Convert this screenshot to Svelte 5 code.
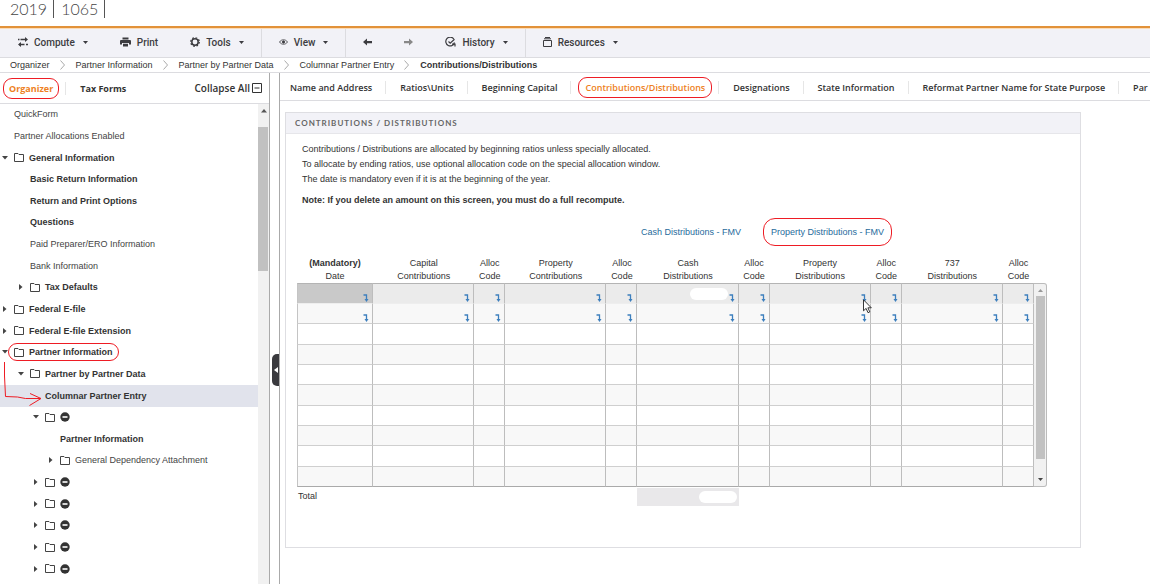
<script lang="ts">
  interface Row {
    label?: string;
    level: number;
    arrow?: 'open' | 'closed';
    folder?: boolean;
    minus?: boolean;
    light?: boolean;
    selected?: boolean;
    marked?: boolean;
  }

  const crumbs = ['Organizer', 'Partner Information', 'Partner by Partner Data', 'Columnar Partner Entry'];

  const tabs = [
    'Name and Address',
    'Ratios\\Units',
    'Beginning Capital',
    'Contributions/Distributions',
    'Designations',
    'State Information',
    'Reformat Partner Name for State Purpose',
    'Par',
  ];
  let activeTab = $state('Contributions/Distributions');

  const partner: Row = { level: 2, arrow: 'closed', folder: true, minus: true };

  const tree: Row[] = [
    { label: 'QuickForm', level: 0, light: true },
    { label: 'Partner Allocations Enabled', level: 0, light: true },
    { label: 'General Information', level: 0, arrow: 'open', folder: true },
    { label: 'Basic Return Information', level: 1 },
    { label: 'Return and Print Options', level: 1 },
    { label: 'Questions', level: 1 },
    { label: 'Paid Preparer/ERO Information', level: 1, light: true },
    { label: 'Bank Information', level: 1, light: true },
    { label: 'Tax Defaults', level: 1, arrow: 'closed', folder: true },
    { label: 'Federal E-file', level: 0, arrow: 'closed', folder: true },
    { label: 'Federal E-file Extension', level: 0, arrow: 'closed', folder: true },
    { label: 'Partner Information', level: 0, arrow: 'open', folder: true, marked: true },
    { label: 'Partner by Partner Data', level: 1, arrow: 'open', folder: true },
    { label: 'Columnar Partner Entry', level: 2, selected: true },
    { ...partner, arrow: 'open' },
    { label: 'Partner Information', level: 3 },
    { label: 'General Dependency Attachment', level: 3, arrow: 'closed', folder: true, light: true },
    partner,
    partner,
    partner,
    partner,
    partner,
  ];

  const columns = [
    ['(Mandatory)', 'Date'],
    ['Capital', 'Contributions'],
    ['Alloc', 'Code'],
    ['Property', 'Contributions'],
    ['Alloc', 'Code'],
    ['Cash', 'Distributions'],
    ['Alloc', 'Code'],
    ['Property', 'Distributions'],
    ['Alloc', 'Code'],
    ['737', 'Distributions'],
    ['Alloc', 'Code'],
  ];
  const rows = Array.from({ length: 10 }, (_, i) => i);

  function colClass(i: number) {
    if (i === 0) return 'col-date';
    return i % 2 ? 'col-amount' : 'col-code';
  }
</script>

{#snippet caret()}
  <svg class="caret" width="5" height="3" viewBox="0 0 5 3"><path d="M0 0h5L2.500 3z" fill="currentColor" /></svg>
{/snippet}

<div class="app">
  <header class="title">
    <span>2019</span><span>1065</span>
  </header>

  <nav class="toolbar" aria-label="Toolbar">
    <div class="group">
      <button>
        <svg width="10" height="10" viewBox="0 0 10 10" fill="none" stroke="currentColor" stroke-width="1.4">
          <path d="M0 2.5h1.5M2.5 2.5H8M1 7.5h5.5M8 7.5h2" />
          <path d="M7 0l3 2.5L7 5zM3 5L0 7.5 3 10z" fill="currentColor" stroke="none" />
        </svg>
        Compute {@render caret()}
      </button>
      <button>
        <svg width="11" height="10" viewBox="0 0 11 10" fill="currentColor">
          <path d="M2.500.5h6v2h-6zM1.200 3h8.600c.7 0 1.200.5 1.200 1.200V7.500H9V6H2v1.500H0V4.200C0 3.500.5 3 1.200 3zM3 6.800h5V9.500H3z" />
        </svg>
        Print
      </button>
      <button>
        <svg width="10" height="10" viewBox="0 0 10 10" fill="none" stroke="currentColor">
          <circle cx="5" cy="5" r="3.2" stroke-width="1.500" />
          <circle cx="5" cy="5" r="4.300" stroke-width="1.200" stroke-dasharray="1.700 1.677" />
        </svg>
        Tools {@render caret()}
      </button>
    </div>
    <div class="group">
      <button>
        <svg width="9" height="8" viewBox="0 0 9 8" fill="none" stroke="currentColor" stroke-width=".8">
          <path d="M.5 4C2.300 1 6.700 1 8.500 4 6.700 7 2.300 7 .5 4z" />
          <circle cx="4.500" cy="4" r="1.200" fill="currentColor" />
        </svg>
        View {@render caret()}
      </button>
    </div>
    <div class="group">
      <button aria-label="Back">
        <svg width="9" height="8" viewBox="0 0 9 8" fill="currentColor"><path d="M0 4l4-3.500V3h5v2.200H4v2.300z" /></svg>
      </button>
      <button class="dim" aria-label="Forward">
        <svg width="9" height="8" viewBox="0 0 9 8" fill="currentColor"><path d="M9 4L5 .5V3H0v2.200h5v2.300z" /></svg>
      </button>
      <button>
        <svg width="11" height="10" viewBox="0 0 11 10" fill="none" stroke="currentColor" stroke-width="1.200">
          <path d="M8.800 2A4.400 4.400 0 1 0 9.500 5.500M3.500 4.500l1.700 1.600L9.500 2.300" />
          <path d="M7 7.200h3v2.300" />
        </svg>
        History {@render caret()}
      </button>
    </div>
    <div class="group">
      <button>
        <svg width="9" height="10" viewBox="0 0 9 10" fill="none" stroke="currentColor">
          <path d="M.5 3.500h8v6h-8zM1 1.800h7M2 .5h5" />
        </svg>
        Resources {@render caret()}
      </button>
    </div>
  </nav>

  <nav class="crumbs" aria-label="Breadcrumb">
    {#each crumbs as crumb}
      <a href="#crumb">{crumb}</a>
      <svg width="5" height="10" viewBox="0 0 5 10" fill="none" stroke="#aaa"><path d="M.5.5l4 4.500-4 4.500" /></svg>
    {/each}
    <strong>Contributions/Distributions</strong>
  </nav>

  <div class="body">
    <aside class="sidebar">
      <div class="side-tabs">
        <a href="#organizer" class="active marked">Organizer</a>
        <a href="#forms">Tax Forms</a>
        <button class="collapse">
          Collapse All
          <svg width="10" height="10" viewBox="0 0 10 10" fill="none" stroke="currentColor"><path d="M.5.5h9v9h-9zM2.500 5h5" /></svg>
        </button>
      </div>

      <div class="side-body">
        <ul class="tree">
          {#each tree as row}
            <li class="l{row.level}" class:light={row.light} class:selected={row.selected}>
              <span class="twist">
                {#if row.arrow}
                  <button aria-label={row.arrow === 'open' ? 'Collapse' : 'Expand'}>
                    <svg width="6" height="6" viewBox="0 0 6 6" fill="#444">
                      <path d={row.arrow === 'open' ? 'M0 1h6L3 4.500z' : 'M1 0v6l3.500-3z'} />
                    </svg>
                  </button>
                {/if}
              </span>
              <a href="#node" class:marked={row.marked} aria-label={row.label ?? 'Partner'}>
                {#if row.folder}
                  <svg width="10" height="9" viewBox="0 0 10 9" fill="none" stroke="#444">
                    <path d="M.5 .5h3.500l1 1h4.500v7h-9z" />
                  </svg>
                {/if}
                {#if row.minus}
                  <svg width="10" height="10" viewBox="0 0 10 10">
                    <circle cx="5" cy="5" r="4.700" fill="#333" /><path d="M2.500 5h5" stroke="#fff" stroke-width="1.600" />
                  </svg>
                {/if}
                {row.label ?? ''}
              </a>
            </li>
          {/each}
        </ul>
        <div class="side-scroll">
          <div class="scroll-end">
            <svg width="6" height="4" viewBox="0 0 6 4"><path d="M0 3.500h6L3 0z" fill="#555" /></svg>
          </div>
          <div class="thumb"></div>
        </div>
      </div>

      <svg class="pointer" width="42" height="48" viewBox="0 0 42 48" fill="none" stroke="#ee1c24">
        <path d="M4.500 1v14l1 20.500 12 .5 8 1.500h15M30 32.500l11 5-11.500 7" />
      </svg>
    </aside>

    <div class="splitter">
      <button aria-label="Hide sidebar">
        <svg width="4" height="6" viewBox="0 0 4 6"><path d="M4 0v6L0 3z" fill="#fff" /></svg>
      </button>
    </div>

    <main>
      <nav class="tabs" aria-label="Screens">
        {#each tabs as tab}
          <span class="tab">
            <a
              href="#tab"
              class:active={tab === activeTab}
              class:marked={tab === activeTab}
              onclick={() => (activeTab = tab)}>{tab}</a>
          </span>
        {/each}
      </nav>

      <section class="panel">
        <h2>Contributions / Distributions</h2>
        <div class="notes">
          <p>Contributions / Distributions are allocated by beginning ratios unless specially allocated.</p>
          <p>To allocate by ending ratios, use optional allocation code on the special allocation window.</p>
          <p>The date is mandatory even if it is at the beginning of the year.</p>
          <p class="note">Note: If you delete an amount on this screen, you must do a full recompute.</p>
        </div>

        <div class="links">
          <a href="#cash">Cash Distributions - FMV</a>
          <a href="#property" class="marked">Property Distributions - FMV</a>
        </div>

        <div class="grid">
          <table>
            <colgroup>
              {#each columns as _, i}
                <col class={colClass(i)} />
              {/each}
            </colgroup>
            <thead>
              <tr>
                {#each columns as [top, bottom], i}
                  <th scope="col">
                    {#if i === 0}<b>{top}</b>{:else}{top}{/if}<br />{bottom}
                  </th>
                {/each}
              </tr>
            </thead>
            <tbody>
              {#each rows as r}
                <tr>
                  {#each columns as [top, bottom], c}
                    <td>
                      <div class="cell">
                        <input type="text" aria-label="{top} {bottom}, row {r + 1}" />
                        {#if r === 0 && c === 5}<span class="blank"></span>{/if}
                        {#if r < 2}
                          <button aria-label="Detail">
                            <svg width="6" height="8" viewBox="0 0 6 8" fill="none" stroke="#3d7fbd">
                              <path d="M.5 1h3v5" stroke-width="1.300" />
                              <path d="M1.500 5h4L3.500 8z" fill="#3d7fbd" stroke="none" />
                            </svg>
                          </button>
                        {/if}
                        {#if r === 0 && c === 7}
                          <svg class="cursor" width="9" height="15" viewBox="0 0 9 15">
                            <path d="M.5.8v11l2.600-2.400 1.900 4.300 1.800-.8-1.900-4.100h3.400z" fill="#fff" stroke="#222" stroke-width=".9" />
                          </svg>
                        {/if}
                      </div>
                    </td>
                  {/each}
                </tr>
              {/each}
            </tbody>
            <tfoot>
              <tr>
                <th scope="row" colspan="5">Total</th>
                <td><div class="total"><span class="blank"></span></div></td>
                <td colspan="5"></td>
              </tr>
            </tfoot>
          </table>
          <div class="grid-scroll">
            <svg width="5" height="3" viewBox="0 0 5 3"><path d="M0 3h5L2.500 0z" fill="#999" /></svg>
            <div class="thumb"></div>
            <svg width="5" height="3" viewBox="0 0 5 3"><path d="M0 0h5L2.500 3z" fill="#444" /></svg>
          </div>
        </div>
      </section>
    </main>
  </div>
</div>

<style>
  :global(body) {
    margin: 0;
    background: #fff;
  }

  .app {
    height: 100vh;
    display: flex;
    flex-direction: column;
    overflow: hidden;
    font-family: 'Liberation Sans', Arial, sans-serif;
    font-size: 9px;
    color: #333;
  }
  a { color: inherit; text-decoration: none; }
  button {
    padding: 0;
    border: 0;
    background: none;
    color: inherit;
    font: inherit;
    cursor: pointer;
  }
  svg { flex: none; display: block; }

  .marked { position: relative; }
  .marked::after {
    content: '';
    position: absolute;
    inset: -4px -6px;
    border: 1px solid #ee1c24;
    border-radius: 9px;
    pointer-events: none;
  }

  .title {
    display: flex;
    align-items: flex-start;
    height: 26px;
    padding-left: 10px;
    border-bottom: 2px solid #e2923a;
    font: 300 16px/18px Lato, 'Open Sans', sans-serif;
    color: #444;
  }
  .title span {
    padding-right: 6px;
    margin-right: 7px;
    border-right: 1px solid #555;
  }

  .toolbar {
    display: flex;
    height: 28px;
    background: #f2f2f7;
    border-top: 1px solid #fbdcb8;
    border-bottom: 1px solid #dcdce0;
    font: 500 10px Roboto, 'Liberation Sans', sans-serif;
    color: #3c3c40;
  }
  .group {
    display: flex;
    gap: 32px;
    padding: 0 17px 2px;
    border-right: 1px solid #dcdce0;
  }
  .group:first-child { padding-left: 18px; }
  .group:last-child { border-right: 0; }
  .group button {
    display: flex;
    align-items: center;
    gap: 6px;
  }
  .group .dim { color: #888; }
  .caret { margin-left: 2px; }

  .crumbs {
    display: flex;
    align-items: center;
    height: 13px;
    padding: 0 0 1px 10px;
    border-bottom: 1px solid #dcdce0;
  }
  .crumbs svg { margin: 0 11px 0 10px; }

  .body {
    flex: 1;
    min-height: 0;
    display: flex;
  }

  .sidebar {
    position: relative;
    flex: 0 0 269px;
    display: flex;
    flex-direction: column;
    border-right: 1px solid #aaa;
  }
  .side-tabs {
    display: flex;
    align-items: center;
    height: 30px;
    padding: 0 7px 0 9px;
    border-bottom: 1px solid #dcdce0;
    font-family: 'Open Sans', sans-serif;
    font-weight: 700;
  }
  .side-tabs a:nth-child(2) {
    margin-left: 12px;
    padding-left: 14px;
    border-left: 1px solid #e6e6e6;
  }
  .collapse {
    display: flex;
    align-items: center;
    gap: 2px;
    margin-left: auto;
    font-size: 10px;
    font-weight: 600;
  }
  .active { color: #ee7f22; }

  .side-body {
    flex: 1;
    min-height: 0;
    display: flex;
  }
  .tree {
    flex: 1;
    display: grid;
    grid-auto-rows: 1fr;
    margin: 0;
    padding: 0 0 4px;
    list-style: none;
    font-weight: 700;
  }
  .tree li {
    display: flex;
    align-items: center;
    padding-bottom: 1px;
  }
  .tree .l0 { padding-left: 2px; }
  .tree .l1 { padding-left: 18px; }
  .tree .l2 { padding-left: 33px; }
  .tree .l3 { padding-left: 48px; }
  .tree .light { font-weight: 400; color: #444; }
  .tree .selected { background: #e1e3ec; }
  .twist { width: 12px; }
  .tree a {
    display: flex;
    align-items: center;
    gap: 5px;
  }

  .side-scroll {
    width: 11px;
    background: #f1f1f1;
  }
  .scroll-end {
    display: flex;
    justify-content: center;
    height: 18px;
    padding-top: 5px;
  }
  .side-scroll .thumb {
    height: 30%;
    margin-right: 1px;
    background: #c1c1c1;
  }
  .pointer {
    position: absolute;
    left: 0;
    top: 288px;
    pointer-events: none;
  }

  .splitter {
    flex: 0 0 9px;
    display: flex;
    align-items: center;
    justify-content: flex-end;
    border-right: 1px solid #aaa;
  }
  .splitter button {
    display: flex;
    align-items: center;
    width: 7px;
    height: 32px;
    padding-left: 2px;
    margin-bottom: -82px;
    border-radius: 5px 0 0 5px;
    background: #3a3a3e;
  }

  main {
    flex: 1;
    min-width: 0;
  }
  .tabs {
    display: flex;
    align-items: center;
    height: 28px;
    padding: 2px 0 0;
    box-sizing: border-box;
    border-bottom: 1px solid #dcdce0;
    overflow: hidden;
    font-family: 'Open Sans', sans-serif;
    font-weight: 600;
    white-space: nowrap;
  }
  .tab {
    padding: 0 13px 0 14px;
    border-right: 1px solid #e6e6e6;
  }
  .tab:first-child { padding-left: 10px; }
  .tab:last-child { border-right: 0; }
  .tab .marked::after { inset: -4px -7px; }

  .panel {
    margin: 11px 69px 0 5px;
    padding-bottom: 41px;
    border: 1px solid #dedee2;
  }
  .panel h2 {
    margin: 0;
    padding: 0 9px;
    border-bottom: 1px solid #e6e6ea;
    background: #f2f2f7;
    font: 700 8px/20px Lato, 'Open Sans', sans-serif;
    letter-spacing: 1px;
    text-transform: uppercase;
    color: #666;
  }
  .notes {
    padding: 8px 16px 0;
    line-height: 15px;
  }
  .notes p { margin: 0; }
  .notes .note {
    margin-top: 6px;
    font-weight: 700;
  }

  .links {
    display: flex;
    justify-content: flex-end;
    gap: 30px;
    margin: 17px 196px 0 0;
    line-height: 14px;
    color: #1f6b9c;
  }
  .links .marked::after {
    inset: -7px -8px;
    border-radius: 12px;
  }

  .grid {
    display: flex;
    margin: 18px 33px 0 11px;
  }
  table {
    flex: 1;
    width: 100%;
    table-layout: fixed;
    border-spacing: 0;
  }
  .col-date { width: 76px; }
  .col-amount { width: 101px; }
  .col-code { width: 31px; }
  th, td { padding: 0; }
  th { font-weight: 400; line-height: 13px; }
  tbody tr { height: 20px; }
  tbody tr:nth-child(3n) { height: 21px; }
  tbody tr:nth-child(even) { background: #f8f8f8; }
  tbody td {
    border-right: 1px solid #bdbdbd;
    border-bottom: 1px solid #cfcfcf;
  }
  tbody td:first-child { border-left: 1px solid #c4c4c4; }
  tbody tr:first-child { background: #ebebeb; }
  tbody tr:first-child td {
    border-top: 1px solid #b4b4b4;
    border-bottom-color: #eee;
  }
  tbody tr:first-child td:first-child { background: #c9c9c9; }
  tbody tr:last-child td { border-bottom-color: #aaa; }
  .cell {
    position: relative;
    display: flex;
    align-items: flex-end;
    height: 19px;
  }
  .cell input {
    flex: 1;
    width: 0;
    min-width: 0;
    height: 100%;
    padding: 0;
    border: 0;
    background: none;
    font: inherit;
  }
  .cell button { margin: 0 3px 1px 4px; }
  .blank {
    width: 38px;
    height: 12px;
    border-radius: 6px;
    background: #fff;
  }
  .cell .blank {
    margin-right: -3px;
    margin-bottom: 3px;
  }
  .cursor {
    position: absolute;
    right: -2px;
    top: 15px;
    z-index: 1;
  }
  tfoot th {
    text-align: left;
    vertical-align: middle;
    padding-left: 1px;
  }
  .total {
    display: flex;
    align-items: center;
    justify-content: flex-end;
    height: 18px;
    margin-top: 1px;
    padding-right: 2px;
    background: #e9e8ea;
  }

  .grid-scroll {
    flex: 0 0 13px;
    display: flex;
    flex-direction: column;
    align-items: center;
    justify-content: space-between;
    gap: 4px;
    margin: 26px 0 19px;
    padding: 5px 0;
    box-sizing: border-box;
    border: 1px solid #bbb;
    border-left: 0;
    border-radius: 0 3px 3px 0;
    background: #f1f1f1;
  }
  .grid-scroll .thumb {
    flex: 1;
    width: 9px;
    margin-bottom: 15px;
    background: #c1c1c1;
  }
</style>
